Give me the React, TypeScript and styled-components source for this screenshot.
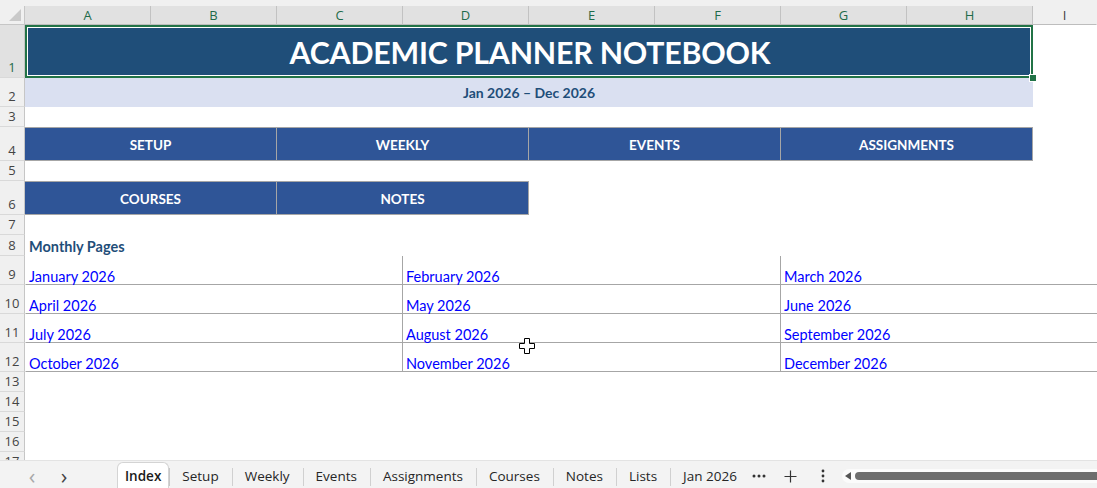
import styled, { createGlobalStyle } from 'styled-components'

const COLS = '25px repeat(8, 126px) 1fr'
const LETTERS = ['A', 'B', 'C', 'D', 'E', 'F', 'G', 'H', 'I']

const GlobalStyle = createGlobalStyle`
	html, body {
		margin: 0;
		padding: 0;
		overflow: hidden;
		background: #ffffff;
	}
	* {
		box-sizing: border-box;
	}
`

const months = [
	['January 2026', 'February 2026', 'March 2026'],
	['April 2026', 'May 2026', 'June 2026'],
	['July 2026', 'August 2026', 'September 2026'],
	['October 2026', 'November 2026', 'December 2026'],
]

const tabs = ['Setup', 'Weekly', 'Events', 'Assignments', 'Courses', 'Notes', 'Lists', 'Jan 2026']

export default function App() {
	return (
		<Page>
			<GlobalStyle />
			<TopStrip />
			<Sheet>
				<HeaderRow>
					<Corner>
						<svg width="12" height="12" viewBox="0 0 12 12">
							<polygon points="12,0 12,12 0,12" fill="#c9c9c9" />
						</svg>
					</Corner>
					{LETTERS.map((l, i) => (
						<ColHead key={l} $selected={i < 8}>
							{l}
						</ColHead>
					))}
				</HeaderRow>

				<Row $h={53}>
					<RowHead $selected>1</RowHead>
					<TitleCell $span={8}>
						ACADEMIC PLANNER NOTEBOOK
						<FillHandle />
					</TitleCell>
				</Row>

				<Row $h={29}>
					<RowHead>2</RowHead>
					<SubtitleCell $span={8}>Jan 2026 – Dec 2026</SubtitleCell>
				</Row>

				<Row $h={20}>
					<RowHead>3</RowHead>
				</Row>

				<Row $h={34}>
					<RowHead>4</RowHead>
					<NavButton $span={2}>SETUP</NavButton>
					<NavButton $span={2}>WEEKLY</NavButton>
					<NavButton $span={2}>EVENTS</NavButton>
					<NavButton $span={2}>ASSIGNMENTS</NavButton>
				</Row>

				<Row $h={20}>
					<RowHead>5</RowHead>
				</Row>

				<Row $h={34}>
					<RowHead>6</RowHead>
					<NavButton $span={2}>COURSES</NavButton>
					<NavButton $span={2}>NOTES</NavButton>
				</Row>

				<Row $h={20}>
					<RowHead>7</RowHead>
				</Row>

				<Row $h={21}>
					<RowHead>8</RowHead>
					<SectionLabel $span={3}>Monthly Pages</SectionLabel>
				</Row>

				{months.map((row, r) => (
					<Row key={r} $h={29}>
						<RowHead>{9 + r}</RowHead>
						{row.map((m, c) => (
							<MonthLink key={m} $span={3} $divider={c > 0}>
								{m}
							</MonthLink>
						))}
					</Row>
				))}

				{[13, 14, 15, 16, 17].map((n) => (
					<Row key={n} $h={20}>
						<RowHead>{n}</RowHead>
					</Row>
				))}

				<Pointer width="17" height="17" viewBox="0 0 17 17">
					<polygon
						points="5.5,0.5 10.5,0.5 10.5,5.5 15.5,5.5 15.5,10.5 10.5,10.5 10.5,15.5 5.5,15.5 5.5,10.5 0.5,10.5 0.5,5.5 5.5,5.5"
						fill="#ffffff"
						stroke="#000000"
						strokeWidth="1"
					/>
				</Pointer>
			</Sheet>

			<TabBar>
				<TabNav>
					<Arrow $muted>‹</Arrow>
					<Arrow>›</Arrow>
				</TabNav>
				<ActiveTab>
					<span>Index</span>
				</ActiveTab>
				{tabs.map((t, i) => (
					<SheetTab key={t} $first={i === 0}>
						{t}
					</SheetTab>
				))}
				<BarIcon $w={18}>
					<svg width="14" height="4" viewBox="0 0 14 4">
						<circle cx="2" cy="2" r="1.5" fill="#333" />
						<circle cx="7" cy="2" r="1.5" fill="#333" />
						<circle cx="12" cy="2" r="1.5" fill="#333" />
					</svg>
				</BarIcon>
				<BarIcon $w={46}>
					<svg width="13" height="13" viewBox="0 0 13 13">
						<path d="M6.5 0.5v12M0.5 6.5h12" stroke="#333" strokeWidth="1.2" />
					</svg>
				</BarIcon>
				<BarIcon $w={18}>
					<svg width="4" height="14" viewBox="0 0 4 14">
						<circle cx="2" cy="2" r="1.4" fill="#333" />
						<circle cx="2" cy="7" r="1.4" fill="#333" />
						<circle cx="2" cy="12" r="1.4" fill="#333" />
					</svg>
				</BarIcon>
				<ScrollTrack>
					<svg width="6" height="8" viewBox="0 0 6 8">
						<polygon points="6,0 6,8 0,4" fill="#555" />
					</svg>
					<ScrollThumb />
				</ScrollTrack>
			</TabBar>
		</Page>
	)
}

const Page = styled.div`
	width: 1097px;
	height: 488px;
	display: flex;
	flex-direction: column;
	font-family: 'Lato', 'Liberation Sans', sans-serif;
	background: #ffffff;
	overflow: hidden;
`

const TopStrip = styled.div`
	height: 6px;
	flex: none;
	background: #f0f0f0;
`

const Sheet = styled.div`
	position: relative;
	flex: 1;
	overflow: hidden;
	display: flex;
	flex-direction: column;
`

const Row = styled.div<{ $h: number }>`
	display: grid;
	grid-template-columns: ${COLS};
	height: ${(p) => p.$h}px;
	flex: none;
`

const HeaderRow = styled(Row).attrs({ $h: 19 })`
	background: #f0f0f0;
`

const Corner = styled.div`
	display: flex;
	align-items: flex-end;
	justify-content: flex-end;
	padding: 0 3px 3px 0;
	border-right: 1px solid #c6c6c6;
	border-bottom: 1px solid #c6c6c6;
`

const ColHead = styled.div<{ $selected?: boolean }>`
	display: flex;
	align-items: center;
	justify-content: center;
	font-family: 'Open Sans', 'Noto Sans', sans-serif;
	font-size: 13px;
	color: ${(p) => (p.$selected ? '#1e6b4a' : '#3c3c3c')};
	background: ${(p) => (p.$selected ? '#e1e1e1' : '#f0f0f0')};
	border-right: 1px solid ${(p) => (p.$selected ? '#c2c2c2' : 'transparent')};
	border-bottom: 1px solid #bdbdbd;
`

const RowHead = styled.div<{ $selected?: boolean }>`
	grid-column: 1;
	display: flex;
	align-items: flex-end;
	justify-content: center;
	padding-bottom: 1px;
	font-family: 'Open Sans', 'Noto Sans', sans-serif;
	font-size: 13px;
	line-height: 17px;
	color: ${(p) => (p.$selected ? '#1e6b4a' : '#444444')};
	background: ${(p) => (p.$selected ? '#e1e1e1' : '#f0f0f0')};
	border-right: 1px solid #c6c6c6;
	border-bottom: 1px solid #d9d9d9;
`

const Cell = styled.div<{ $span: number }>`
	grid-column: span ${(p) => p.$span};
	display: flex;
	min-width: 0;
	white-space: nowrap;
`

const TitleCell = styled(Cell)`
	position: relative;
	align-items: center;
	justify-content: center;
	padding-left: 2px;
	background: #1f4e79;
	color: #ffffff;
	font-weight: 700;
	font-size: 30.3px;
	letter-spacing: -0.2px;
	box-shadow: inset 0 0 0 2px #217346, inset 0 0 0 3px #ffffff;
`

const FillHandle = styled.span`
	position: absolute;
	right: -3px;
	bottom: -3px;
	width: 6px;
	height: 6px;
	background: #217346;
	outline: 1px solid #ffffff;
`

const SubtitleCell = styled(Cell)`
	align-items: center;
	justify-content: center;
	background: #dae0f1;
	color: #1f4e79;
	font-weight: 700;
	font-size: 14px;
`

const NavButton = styled(Cell)`
	align-items: center;
	justify-content: center;
	padding-top: 1px;
	background: #2f5597;
	color: #ffffff;
	font-weight: 700;
	font-size: 13.5px;
	border: 1px solid #a6a6a6;
	border-left-width: 0;
`

const SectionLabel = styled(Cell)`
	align-items: flex-end;
	padding: 0 0 0 4px;
	color: #1f4e79;
	font-weight: 700;
	font-size: 14.5px;
	line-height: 19px;
`

const MonthLink = styled(Cell)<{ $divider?: boolean }>`
	align-items: flex-end;
	padding: 0 0 0 3px;
	color: #0000ff;
	font-size: 14.5px;
	line-height: 15px;
	border-bottom: 1px solid #a6a6a6;
	border-left: 1px solid ${(p) => (p.$divider ? '#a6a6a6' : 'transparent')};
	margin-left: ${(p) => (p.$divider ? '-1px' : '0')};
`

const Pointer = styled.svg`
	position: absolute;
	left: 519px;
	top: 332px;
`

const TabBar = styled.div`
	height: 28px;
	flex: none;
	display: flex;
	align-items: stretch;
	background: #f3f3f3;
	border-top: 1px solid #e3e3e3;
	font-family: 'Open Sans', 'Noto Sans', sans-serif;
	font-size: 13.5px;
	color: #262626;
`

const TabNav = styled.div`
	width: 117px;
	display: flex;
	align-items: center;
	padding: 3px 0 0 26px;
	gap: 20px;
`

const Arrow = styled.span<{ $muted?: boolean }>`
	width: 12px;
	text-align: center;
	font-size: 22px;
	line-height: 20px;
	color: ${(p) => (p.$muted ? '#a8a8a8' : '#444444')};
	padding-bottom: 3px;
`

const ActiveTab = styled.div`
	display: flex;
	align-items: center;
	padding: 2px 7px 0;
	margin-top: 1px;
	background: #ffffff;
	border: 1px solid #d4d4d4;
	border-bottom: none;
	border-radius: 6px 6px 0 0;
	font-weight: 600;
	color: #1a1a1a;
	& > span {
		position: relative;
		padding-bottom: 2px;
	}
	& > span::after {
		content: '';
		position: absolute;
		left: 0;
		right: 0;
		bottom: -3px;
		height: 2px;
		background: #1e7145;
	}
`

const SheetTab = styled.div<{ $first?: boolean }>`
	position: relative;
	display: flex;
	align-items: center;
	padding: 3px 13px 0;
	&::before {
		content: '';
		position: absolute;
		left: 0;
		top: 7px;
		bottom: 2px;
		width: 1px;
		background: ${(p) => (p.$first ? '#c8c8c8' : '#d0d0d0')};
	}
`

const BarIcon = styled.div<{ $w: number }>`
	width: ${(p) => p.$w}px;
	display: flex;
	align-items: center;
	justify-content: center;
	padding-top: 3px;
`

const ScrollTrack = styled.div`
	flex: 1;
	align-self: center;
	height: 14px;
	margin: 3px 0 0 10px;
	display: flex;
	align-items: center;
	gap: 4px;
	padding-left: 3px;
	background: #fbfbfb;
	border-radius: 7px 0 0 7px;
`

const ScrollThumb = styled.div`
	flex: 1;
	height: 8px;
	background: #6d6d6d;
	border-radius: 4px 0 0 4px;
`
